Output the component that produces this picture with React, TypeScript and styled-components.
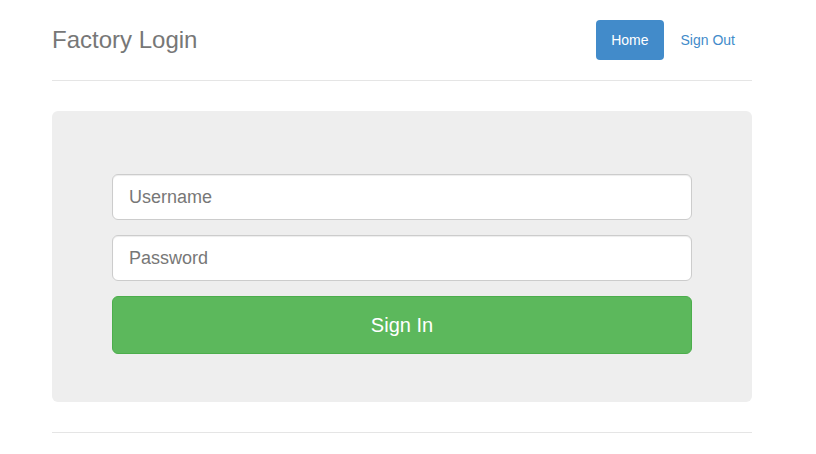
import React from "react";
import styled, { createGlobalStyle } from "styled-components";

const GlobalStyle = createGlobalStyle`
  * { box-sizing: border-box; }
  body {
    margin: 0;
    padding: 20px 0 0;
    font-family: "Liberation Sans", Arial, sans-serif;
    font-size: 14px;
    color: #333;
    background: #fff;
  }
`;

const Container = styled.div`
  width: 700px;
  margin-left: 52px;
`;

const Header = styled.div`
  display: flex;
  justify-content: space-between;
  align-items: center;
  padding-bottom: 20px;
  border-bottom: 1px solid #e5e5e5;
`;

const Brand = styled.h3`
  margin: 0;
  font-size: 24px;
  font-weight: 400;
  line-height: 40px;
  color: #777;
`;

const Nav = styled.ul`
  display: flex;
  gap: 2px;
  list-style: none;
  margin: 0 2px 0 0;
  padding: 0;
`;

const Pill = styled.a<{ $active?: boolean }>`
  display: block;
  padding: 0 15px;
  line-height: 40px;
  height: 40px;
  border-radius: 4px;
  font-size: 14px;
  text-decoration: none;
  color: ${(p) => (p.$active ? "#fff" : "#428bca")};
  background: ${(p) => (p.$active ? "#428bca" : "transparent")};
  cursor: pointer;
`;

const Jumbotron = styled.div`
  margin-top: 30px;
  background: #eee;
  border-radius: 6px;
  padding: 63px 60px 48px;
`;

const Form = styled.form`
  display: flex;
  flex-direction: column;
  gap: 15px;
`;

const Input = styled.input`
  display: block;
  width: 100%;
  height: 46px;
  padding: 10px 16px;
  font-family: "Liberation Sans", Arial, sans-serif;
  font-size: 18px;
  color: #555;
  background: #fff;
  border: 1px solid #ccc;
  border-radius: 6px;
  box-shadow: inset 0 1px 1px rgba(0, 0, 0, 0.075);
  outline: none;
  &::placeholder {
    color: #777;
  }
`;

const SubmitButton = styled.button`
  height: 58px;
  width: 100%;
  font-family: "Liberation Sans", Arial, sans-serif;
  font-size: 20px;
  color: #fff;
  background: #5cb85c;
  border: 1px solid #4cae4c;
  border-radius: 6px;
  cursor: pointer;
`;

const Footer = styled.div`
  margin-top: 30px;
  padding-top: 19px;
  border-top: 1px solid #e5e5e5;
  height: 40px;
`;

export default function App() {
  return (
    <>
      <GlobalStyle />
      <Container>
        <Header>
          <Brand>Factory Login</Brand>
          <Nav>
            <li>
              <Pill $active>Home</Pill>
            </li>
            <li>
              <Pill>Sign Out</Pill>
            </li>
          </Nav>
        </Header>
        <Jumbotron>
          <Form onSubmit={(e) => e.preventDefault()}>
            <Input type="text" placeholder="Username" />
            <Input type="password" placeholder="Password" />
            <SubmitButton type="submit">Sign In</SubmitButton>
          </Form>
        </Jumbotron>
        <Footer />
      </Container>
    </>
  );
}
